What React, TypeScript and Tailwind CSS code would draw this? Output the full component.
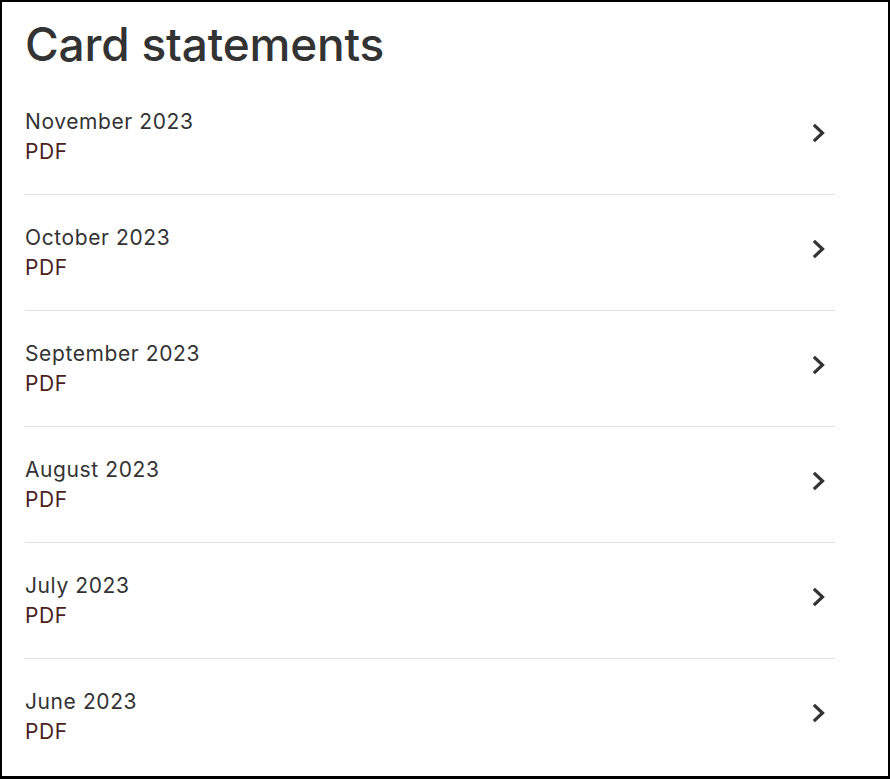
import React from 'react';

const statements = [
  'November 2023',
  'October 2023',
  'September 2023',
  'August 2023',
  'July 2023',
  'June 2023',
];

const Chevron = () => (
  <svg width="16" height="20" viewBox="0 0 16 20" fill="none" className="shrink-0">
    <path d="M4 3L11.5 10L4 17" stroke="#333333" strokeWidth="3.2" strokeLinecap="square" />
  </svg>
);

export default function App() {
  return (
    <div
      className="w-[890px] h-[779px] overflow-hidden bg-white border-2 border-b-[3px] border-black text-[#333333]"
      style={{ fontFamily: 'Inter, "Liberation Sans", sans-serif' }}
    >
      <div className="pl-[23px] pr-[53px]">
        <h1 className="text-[46px] leading-[56px] font-medium tracking-[-0.2px] pt-[14px] pb-[7px]">
          Card statements
        </h1>

        <ul>
          {statements.map((month, i) => (
            <li
              key={month}
              className={`flex items-center justify-between pt-[28px] pb-[27px] cursor-pointer ${
                i < statements.length - 1 ? 'border-b border-[#e0e0e0]' : ''
              }`}
            >
              <div className="text-[21px] leading-[30px] tracking-[0.6px]">
                <div>{month}</div>
                <div className="text-[#4a2222]">PDF</div>
              </div>
              <div className="pr-[8px] -mt-[8px]">
                <Chevron />
              </div>
            </li>
          ))}
        </ul>
      </div>
    </div>
  );
}
